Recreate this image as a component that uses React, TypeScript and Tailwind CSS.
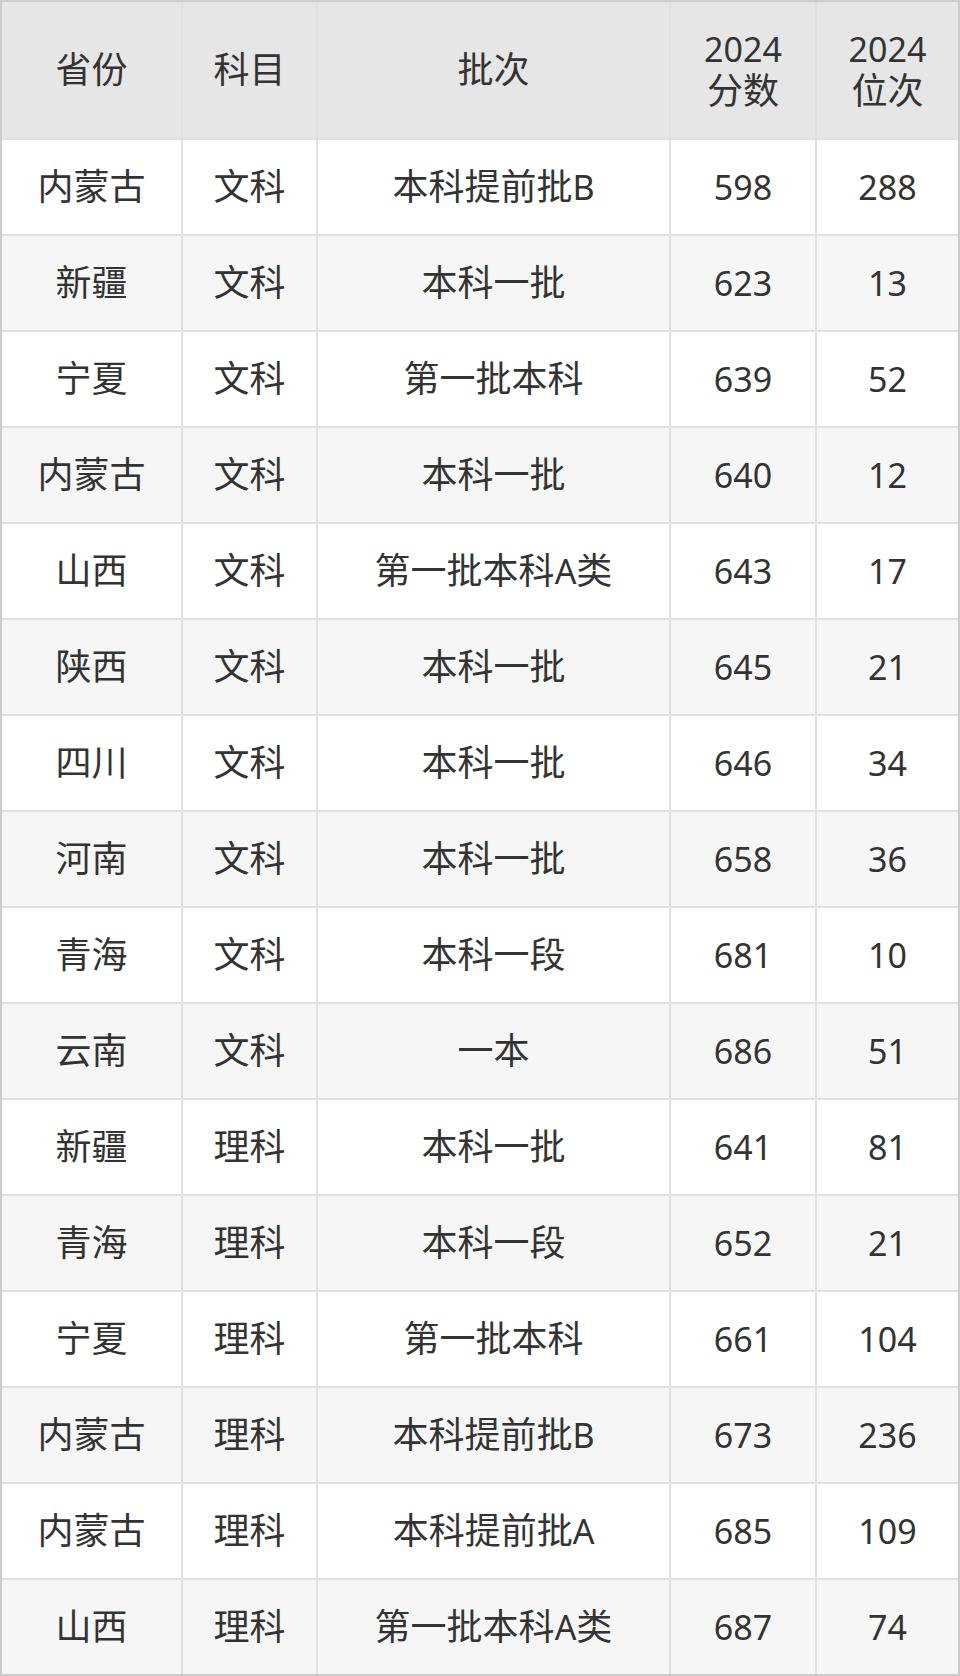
type Row = {
  province: string;
  subject: string;
  batch: string;
  score: string;
  rank: string;
};

const rows: Row[] = [
  { province: "内蒙古", subject: "文科", batch: "本科提前批B", score: "598", rank: "288" },
  { province: "新疆", subject: "文科", batch: "本科一批", score: "623", rank: "13" },
  { province: "宁夏", subject: "文科", batch: "第一批本科", score: "639", rank: "52" },
  { province: "内蒙古", subject: "文科", batch: "本科一批", score: "640", rank: "12" },
  { province: "山西", subject: "文科", batch: "第一批本科A类", score: "643", rank: "17" },
  { province: "陕西", subject: "文科", batch: "本科一批", score: "645", rank: "21" },
  { province: "四川", subject: "文科", batch: "本科一批", score: "646", rank: "34" },
  { province: "河南", subject: "文科", batch: "本科一批", score: "658", rank: "36" },
  { province: "青海", subject: "文科", batch: "本科一段", score: "681", rank: "10" },
  { province: "云南", subject: "文科", batch: "一本", score: "686", rank: "51" },
  { province: "新疆", subject: "理科", batch: "本科一批", score: "641", rank: "81" },
  { province: "青海", subject: "理科", batch: "本科一段", score: "652", rank: "21" },
  { province: "宁夏", subject: "理科", batch: "第一批本科", score: "661", rank: "104" },
  { province: "内蒙古", subject: "理科", batch: "本科提前批B", score: "673", rank: "236" },
  { province: "内蒙古", subject: "理科", batch: "本科提前批A", score: "685", rank: "109" },
  { province: "山西", subject: "理科", batch: "第一批本科A类", score: "687", rank: "74" },
];

const headers = ["省份", "科目", "批次", "2024\n分数", "2024\n位次"];

// CJK glyphs in the reference run a touch larger than the Latin digits
function Text({ value }: { value: string }) {
  const parts = value.split(/([\u4e00-\u9fff]+)/).filter(Boolean);
  return (
    <>
      {parts.map((p, i) =>
        /[\u4e00-\u9fff]/.test(p) ? (
          <span key={i} className="text-[36px]">
            {p}
          </span>
        ) : (
          <span key={i}>{p}</span>
        )
      )}
    </>
  );
}

export default function App() {
  return (
    <div
      className="w-[960px] text-[#333333] text-[34px] leading-[1.2]"
      style={{ fontFamily: '"Noto Sans", "Noto Sans CJK SC", sans-serif' }}
    >
      <div className="border-2 border-[#cccccc]">
        <div className="grid grid-cols-[179px_133px_351px_144px_141px] gap-[2px] bg-[#e0e0e0]">
          {headers.map((h) => (
            <div
              key={h}
              className="h-[136px] bg-[#e6e6e6] flex flex-col items-center justify-center text-center leading-[41px]"
            >
              {h.split("\n").map((line) => (
                <div key={line}>
                  <Text value={line} />
                </div>
              ))}
            </div>
          ))}
          {rows.map((r, i) => {
            const bg = i % 2 === 0 ? "bg-white" : "bg-[#f6f6f6]";
            return [r.province, r.subject, r.batch, r.score, r.rank].map((v, j) => (
              <div
                key={`${i}-${j}`}
                className={`h-[94px] flex items-center justify-center text-center ${bg}`}
              >
                <Text value={v} />
              </div>
            ));
          })}
        </div>
      </div>
    </div>
  );
}
